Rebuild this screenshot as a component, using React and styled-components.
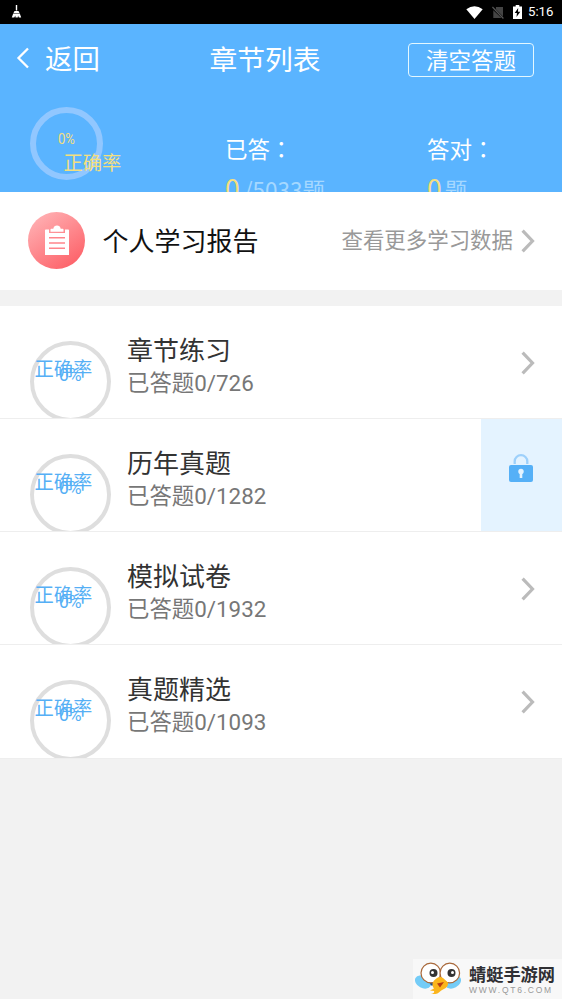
import React from "react";
import styled, { createGlobalStyle } from "styled-components";

const Global = createGlobalStyle`
  *, *::before, *::after { box-sizing: border-box; }
  body {
    margin: 0;
    background: #f2f2f2;
    font-family: Roboto, "Noto Sans CJK SC", sans-serif;
  }
`;

const Screen = styled.div`
  display: flex;
  flex-direction: column;
  height: 999px;
  overflow: hidden;
  background: #f2f2f2;
  white-space: nowrap;
`;

const StatusBar = styled.div`
  display: flex;
  align-items: center;
  height: 24px;
  flex: none;
  padding: 0 7px 0 11px;
  background: #000;
  color: #fff;
`;

const StatusIcons = styled.div`
  display: flex;
  align-items: center;
  gap: 9px;
  margin-left: auto;
`;

const Clock = styled.span`
  margin-left: -3px;
  font-size: 13.2px;
  font-weight: 400;
  line-height: 24px;
  width: 27px;
`;

const Header = styled.header`
  display: flex;
  flex-direction: column;
  flex: none;
  height: 167.5px;
  overflow: hidden;
  background: #5ab4ff;
  color: #fff;
`;

const NavBar = styled.div`
  display: grid;
  grid-template-columns: 1fr auto 1fr;
  align-items: center;
  flex: none;
  height: 71px;
  padding: 0 28px 0 16px;
`;

const BackButton = styled.div`
  display: flex;
  align-items: center;
  gap: 14px;
  font-size: 27.4px;
  line-height: 40px;
  height: 43px;

  svg { margin-bottom: 4px; }
`;

const Title = styled.div`
  font-size: 27.8px;
  line-height: 41px;
  height: 40px;
  transform: translateX(-10px);
`;

const ClearButton = styled.div`
  justify-self: end;
  width: 126px;
  height: 34px;
  margin-top: 1px;
  border: 1.5px solid #e4f8ff;
  border-radius: 4px;
  font-size: 22.5px;
  line-height: 34px;
  text-align: center;
`;

const Stats = styled.div`
  display: grid;
  grid-template-columns: 195.5px 202px 1fr;
  padding-left: 29.5px;
`;

const ScoreRing = styled.div`
  position: relative;
  width: 73px;
  height: 73px;
  margin-top: 12px;
  border: 6.5px solid #91c7ff;
  border-radius: 50%;
  color: #f4df7e;
`;

const RingText = styled.span`
  position: absolute;
  left: ${(p) => p.$x}px;
  top: ${(p) => p.$y}px;
  font-size: ${(p) => p.$size}px;
  line-height: 24px;
  transform: scaleX(${(p) => p.$stretch || 1});
  transform-origin: left center;
`;

const Stat = styled.div`
  padding-top: 37px;
  font-family: "Noto Sans CJK SC", sans-serif;
  font-size: 22.5px;
`;

const StatLabel = styled.div`
  height: 38px;
  line-height: 32px;
`;

const Colon = styled.span`
  font-family: "Noto Sans CJK TC", sans-serif;
`;

const StatValue = styled.div`
  height: 44px;
  line-height: 36px;
  font-size: 22.5px;
  color: #a5d8ff;
`;

const StatCount = styled.span`
  font-size: 26.5px;
  color: #f4df7e;
  margin-right: ${(p) => p.$gap}px;
`;

const Report = styled.section`
  display: flex;
  align-items: center;
  flex: none;
  height: 98.5px;
  margin-bottom: 15.5px;
  padding: 0 27px 0 28px;
  background: #fff;
`;

const ReportBadge = styled.div`
  display: grid;
  place-items: center;
  width: 57px;
  height: 57px;
  border-radius: 50%;
  background: linear-gradient(145deg, #ffb1b4 8%, #fd5f66 92%);
`;

const ReportTitle = styled.div`
  margin-left: 17.5px;
  font-size: 26px;
  line-height: 40px;
  height: 38px;
  color: #111;
`;

const ReportMore = styled.div`
  display: flex;
  align-items: center;
  gap: 8px;
  height: 40px;
  margin-left: auto;
  font-size: 21.45px;
  line-height: 34px;
  color: #999;
`;

const Row = styled.div`
  display: flex;
  flex: none;
  height: 113.25px;
  overflow: hidden;
  background: #fff;
  border-bottom: 1px solid #eee;
`;

const ProgressRing = styled.div`
  position: relative;
  flex: none;
  width: 81px;
  height: 81px;
  margin: 35px 16px 0 30px;
  border: 4.5px solid #dedede;
  border-radius: 50%;
  color: #55aff5;
`;

const RowBody = styled.div`
  flex: 1;
  padding-top: 27px;
`;

const RowTitle = styled.div`
  height: 33px;
  font-size: 26px;
  line-height: 36px;
  color: #333;
`;

const RowMeta = styled.div`
  font-size: 22.4px;
  line-height: 34px;
  color: #777;
`;

const RowEnd = styled.div`
  display: flex;
  align-items: center;
  justify-content: ${(p) => (p.$locked ? "center" : "flex-end")};
  width: 81.5px;
  padding: ${(p) => (p.$locked ? "0 0 14px" : "2px 27px 0 0")};
  background: ${(p) => (p.$locked ? "#e4f3ff" : "transparent")};
`;

const Watermark = styled.div`
  display: flex;
  align-items: center;
  align-self: flex-end;
  margin-top: auto;
  width: 149px;
  height: 40px;
  padding-left: 2px;
  background: #f8f8f8;
`;

const Brand = styled.div`
  margin-left: 8px;
  margin-top: -1px;
`;

const BrandName = styled.div`
  font-family: "Noto Sans CJK SC", sans-serif;
  font-size: 17.2px;
  font-weight: 700;
  line-height: 22px;
  color: #303034;
`;

const BrandUrl = styled.div`
  font-family: "Liberation Sans", sans-serif;
  font-size: 8.5px;
  line-height: 10px;
  letter-spacing: 1.75px;
  color: #999;
`;

const Chevron = () => (
  <svg width="14" height="24" viewBox="0 0 14 24" fill="none">
    <path d="M1.6 1.6 11.5 12 1.6 22.4" stroke="#bbb" strokeWidth="3.2" />
  </svg>
);

const BackIcon = () => (
  <svg width="15" height="22" viewBox="0 0 15 22" fill="none">
    <path d="M12 1.5 2.5 11 12 20.5" stroke="#fff" strokeWidth="2.3" />
  </svg>
);

const BroomIcon = () => (
  <svg width="12" height="14" viewBox="0 0 12 14" fill="#fff">
    <path d="M4.8 0h1.4v5.5h-1.4zM3.5 6h4l1 2h-6zM2.2 8.5h6.6L10.2 12.6H7.8L7 10.5l-.2 2.1H4.5l-.2-2.1-1 2.1H.8z" />
  </svg>
);

const WifiIcon = () => (
  <svg width="17" height="13" viewBox="0 0 17 13">
    <path d="M.3 3.2Q8.5-2.8 16.7 3.2L8.5 13z" fill="#fff" />
  </svg>
);

const NoSimIcon = () => (
  <svg width="12" height="13" viewBox="0 0 12 13">
    <path d="M4 1h7v9.5L3.8 3.2zM1.3 4.3 9.5 12H1.3z" fill="#444" />
    <path d="m.4 1 11 11.5" stroke="#555" strokeWidth="1.3" />
  </svg>
);

const BatteryIcon = () => (
  <svg width="9" height="14" viewBox="0 0 9 14">
    <path d="M2.7 0h3.6v1.4H9V14H0V1.4h2.7z" fill="#fff" />
    <path d="M5.2 3 1.7 8h2.2l-.4 4 3.8-5.2H5z" fill="#000" />
  </svg>
);

const ClipboardIcon = () => (
  <svg width="24" height="31" viewBox="0 0 24 31">
    <path d="M.8 4.5H4V8h16V4.5h3.2q.8 0 .8.8V30H0V5.3q0-.8.8-.8z" fill="#fff" />
    <path d="M5.5 6.8V4.6q0-.8.8-.8h2Q9 .6 12 .6t3.7 3.2h2q.8 0 .8.8v2.2z" fill="#fff" />
    <path d="M4 12.8h16M4 18h16M4 23.2h16" stroke="#ff858b" strokeWidth="1.4" />
  </svg>
);

const LockIcon = () => (
  <svg width="24" height="28" viewBox="0 0 24 28">
    <path d="M5.7 10V7.2a6.3 6 0 0 1 12.6 0V10" fill="none" stroke="#9dd0fb" strokeWidth="2.3" />
    <rect x="0" y="11" width="24" height="17" rx="2" fill="#55b0f7" />
    <circle cx="12" cy="17.5" r="2.7" fill="#e4f3ff" />
    <path d="M10.7 17h2.6v7h-2.6z" fill="#e4f3ff" />
  </svg>
);

const Mascot = () => (
  <svg width="46" height="34" viewBox="0 0 46 34">
    <ellipse cx="8" cy="20" rx="8.5" ry="6" transform="rotate(28 8 20)" fill="#74ccf7" />
    <ellipse cx="38" cy="20" rx="8.5" ry="6" transform="rotate(-28 38 20)" fill="#74ccf7" />
    <path d="M13 18h20l-3 5.5H16z" fill="#1b4c8c" />
    <g fill="#fff" stroke="#a8683a" strokeWidth="1.2">
      <circle cx="15.8" cy="11" r="9.8" />
      <circle cx="34.8" cy="11" r="9.8" />
    </g>
    <path d="M22 16q3-2 6 0l5 4.500q.5 5-5 7-2 1-3 2-2 3-9 2.500 4-1 3-3l-4-.5 4-2q-3-4 0-8z" fill="#fbb51c" />
    <path d="m22 21.500 7-1.500-4 5.500z" fill="#b83b13" />
    <circle cx="18.5" cy="11" r="4" fill="#333" />
    <circle cx="36.500" cy="11" r="4" fill="#333" />
    <circle cx="17.500" cy="10.500" r="1.500" fill="#fff" />
    <circle cx="37.500" cy="10.500" r="1.500" fill="#fff" />
  </svg>
);

const chapters = [
  { title: "章节练习", total: 726 },
  { title: "历年真题", total: 1282, locked: true },
  { title: "模拟试卷", total: 1932 },
  { title: "真题精选", total: 1093 },
];

export default function App() {
  return (
    <>
      <Global />
      <Screen>
        <StatusBar>
          <BroomIcon />
          <StatusIcons>
            <WifiIcon />
            <NoSimIcon />
            <BatteryIcon />
            <Clock>5:16</Clock>
          </StatusIcons>
        </StatusBar>
        <Header>
          <NavBar>
            <BackButton><BackIcon />返回</BackButton>
            <Title>章节列表</Title>
            <ClearButton>清空答题</ClearButton>
          </NavBar>
          <Stats>
            <ScoreRing>
              <RingText $x={22} $y={14.5} $size={14.5} $stretch={0.9}>0%</RingText>
              <RingText $x={28} $y={39} $size={19.3}>正确率</RingText>
            </ScoreRing>
            <Stat>
              <StatLabel>已答<Colon>：</Colon></StatLabel>
              <StatValue><StatCount $gap={4}>0</StatCount>/5033题</StatValue>
            </Stat>
            <Stat>
              <StatLabel>答对<Colon>：</Colon></StatLabel>
              <StatValue><StatCount $gap={3}>0</StatCount>题</StatValue>
            </Stat>
          </Stats>
        </Header>
        <Report>
          <ReportBadge><ClipboardIcon /></ReportBadge>
          <ReportTitle>个人学习报告</ReportTitle>
          <ReportMore>查看更多学习数据<Chevron /></ReportMore>
        </Report>
        {chapters.map((c) => (
          <Row key={c.title}>
            <ProgressRing>
              <RingText $x={0.5} $y={13} $size={19.3}>正确率</RingText>
              <RingText $x={24.5} $y={18.5} $size={19} $stretch={0.92}>0%</RingText>
            </ProgressRing>
            <RowBody>
              <RowTitle>{c.title}</RowTitle>
              <RowMeta>已答题0/{c.total}</RowMeta>
            </RowBody>
            <RowEnd $locked={c.locked}>{c.locked ? <LockIcon /> : <Chevron />}</RowEnd>
          </Row>
        ))}
        <Watermark>
          <Mascot />
          <Brand>
            <BrandName>蜻蜓手游网</BrandName>
            <BrandUrl>WWW.QT6.COM</BrandUrl>
          </Brand>
        </Watermark>
      </Screen>
    </>
  );
}
